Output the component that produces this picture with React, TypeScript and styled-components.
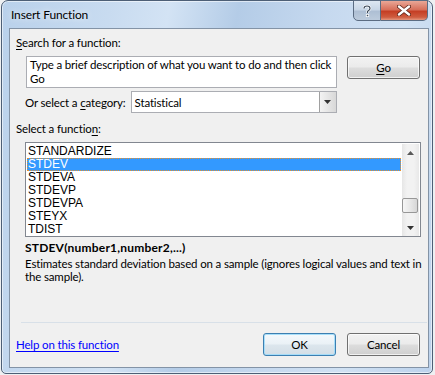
import React from "react";
import styled, { createGlobalStyle, css } from "styled-components";

const GlobalStyle = createGlobalStyle`
  html, body { margin: 0; padding: 0; }
  body {
    background: #eef0f2;
    font-family: "Segoe UI", Lato, "Noto Sans", sans-serif;
    font-size: 11.5px;
    letter-spacing: -0.15px;
    color: #000;
    width: 435px;
    height: 375px;
    overflow: hidden;
  }
`;

const Window = styled.div`
  box-sizing: border-box;
  margin-left: 1px;
  width: 432px;
  height: 374px;
  border: 1px solid #4d5f76;
  border-radius: 7px 7px 5px 5px;
  background: linear-gradient(100deg, #b9d1eb 0%, #c8dbf0 22%, #d3e3f4 34%, #b4cce7 48%, #c6d9ef 66%, #d0e1f3 82%, #bcd2ec 100%);
  box-shadow: inset 0 0 0 1px rgba(255, 255, 255, 0.55);
  display: flex;
  flex-direction: column;
  padding: 0 3px 5px 7px;
`;

const TitleBar = styled.div`
  height: 27px;
  display: flex;
  align-items: flex-start;
  justify-content: space-between;
`;

const Title = styled.div`
  padding: 6px 0 0 2px;
  font-size: 12px;
  color: #000;
  text-shadow: 0 0 6px rgba(255, 255, 255, 0.9);
`;

const CaptionButtons = styled.div`
  display: flex;
  margin-top: -1px;
  margin-right: 1px;
`;

const CaptionButton = styled.div<{ $close?: boolean }>`
  box-sizing: border-box;
  height: 21px;
  display: flex;
  align-items: center;
  justify-content: center;
  border: 1px solid #5b6c82;
  ${(p) =>
    p.$close
      ? css`
          width: 47px;
          border-left: none;
          border-radius: 0 0 5px 0;
          background: linear-gradient(180deg, #e9a797 0%, #d7705b 45%, #c53f25 55%, #cf5c3f 85%, #e39780 100%);
        `
      : css`
          width: 28px;
          border-radius: 0 0 0 5px;
          background: linear-gradient(180deg, #dde7f2 0%, #c8d6e6 45%, #aebfd4 55%, #bccbdc 100%);
        `}
`;

const Panel = styled.div`
  flex: 1;
  box-sizing: border-box;
  background: #f0f0f0;
  border: 1px solid #8393a6;
  display: flex;
  flex-direction: column;
  padding: 6px 7px 0 6px;
`;

const Label = styled.div<{ $gap?: number }>`
  line-height: 15px;
  height: 15px;
  margin-top: ${(p) => p.$gap ?? 0}px;
  white-space: nowrap;
`;

const U = styled.span`
  text-decoration: underline;
  text-underline-offset: 2px;
`;

const SearchRow = styled.div`
  display: flex;
  align-items: flex-start;
  margin-top: 6px;
  padding-left: 10px;
  gap: 10px;
`;

const SearchBox = styled.div`
  box-sizing: border-box;
  width: 311px;
  height: 32px;
  background: #fff;
  border: 1px solid #abadb3;
  padding: 1px 3px;
  line-height: 14px;
  white-space: nowrap;
  overflow: hidden;
`;

const Button = styled.div<{ $default?: boolean }>`
  box-sizing: border-box;
  width: 73px;
  height: 23px;
  border: 1px solid ${(p) => (p.$default ? "#3c7fb1" : "#707070")};
  border-radius: 3px;
  display: flex;
  align-items: center;
  justify-content: center;
  background: ${(p) =>
    p.$default
      ? "linear-gradient(180deg, #f4f9fc 0%, #eaf1f6 48%, #dce6ed 52%, #d3dee6 100%)"
      : "linear-gradient(180deg, #f2f2f2 0%, #ebebeb 48%, #dddddd 52%, #cfcfcf 100%)"};
  box-shadow: inset 0 0 0 1px ${(p) => (p.$default ? "rgba(160, 220, 250, 0.9)" : "rgba(255,255,255,0.7)")};
`;

const CategoryRow = styled.div`
  display: flex;
  align-items: center;
  margin-top: 3px;
  padding-left: 9px;
  gap: 5px;
`;

const Select = styled.div`
  box-sizing: border-box;
  width: 206px;
  height: 22px;
  background: #fff;
  border: 1px solid #abadb3;
  display: flex;
  align-items: center;
  padding-left: 3px;
  justify-content: space-between;
`;

const SelectArrow = styled.div`
  box-sizing: border-box;
  width: 17px;
  height: 20px;
  border-left: 1px solid #a0a0a0;
  background: linear-gradient(90deg, #f3f3f3, #d8d8d8);
  display: flex;
  align-items: center;
  justify-content: center;
`;

const ListBox = styled.div`
  box-sizing: border-box;
  margin: 6px 0 0 9px;
  width: 396px;
  height: 95px;
  border: 1px solid #828790;
  background: #fff;
  display: flex;
  padding: 1px 1px 0 1px;
`;

const Items = styled.div`
  width: 375px;
  padding-top: 1px;
`;

const Item = styled.div<{ $selected?: boolean }>`
  box-sizing: border-box;
  height: 13px;
  line-height: 13px;
  font-family: "Liberation Sans", Arial, sans-serif;
  font-size: 12px;
  letter-spacing: 0;
  padding-left: 1px;
  ${(p) =>
    p.$selected &&
    css`
      background: #3399ff;
      color: #fff;
      outline: 1px dotted #e8902a;
      outline-offset: -1px;
    `}
`;

const ScrollBar = styled.div`
  margin-left: 1px;
  width: 17px;
  height: 92px;
  background: linear-gradient(90deg, #e6e6e6, #f2f2f2 30%, #f2f2f2 70%, #e8e8e8);
  display: flex;
  flex-direction: column;
`;

const ScrollArrow = styled.div`
  height: 17px;
  display: flex;
  align-items: center;
  justify-content: center;
`;

const Track = styled.div`
  flex: 1;
`;

const Thumb = styled.div`
  box-sizing: border-box;
  margin-top: 37px;
  width: 16px;
  height: 15px;
  border: 1px solid #979797;
  border-radius: 2px;
  background: linear-gradient(90deg, #f6f6f6 0%, #e8e8e8 50%, #d6d6d6 100%);
`;

const Signature = styled.div`
  margin: 3px 0 0 9px;
  font-weight: bold;
  font-size: 12px;
  letter-spacing: 0.2px;
  line-height: 16px;
`;

const Description = styled.div`
  margin: 1px 0 0 9px;
  line-height: 13px;
  white-space: nowrap;
`;

const Spacer = styled.div`
  flex: 1;
`;

const Separator = styled.div`
  margin: 0 0 0 5px;
  height: 1px;
  width: 406px;
  background: #d8e0e8;
`;

const Footer = styled.div`
  display: flex;
  align-items: center;
  height: 44px;
`;

const HelpLink = styled.a`
  color: #0000ff;
  text-decoration: underline;
  text-underline-offset: 2px;
  margin-right: auto;
  margin-top: -2px;
  cursor: pointer;
`;

const ButtonGroup = styled.div`
  display: flex;
  gap: 11px;
  margin-right: 1px;
  margin-top: -2px;
`;

const Triangle = ({ up }: { up?: boolean }) => (
  <svg width="7" height="4" viewBox="0 0 7 4">
    <path d={up ? "M3.5 0 L7 4 L0 4 Z" : "M0 0 L7 0 L3.5 4 Z"} fill={up ? "#5a5a5a" : "#333"} />
  </svg>
);

const functions = ["STANDARDIZE", "STDEV", "STDEVA", "STDEVP", "STDEVPA", "STEYX", "TDIST"];

export default function App() {
  return (
    <>
      <GlobalStyle />
      <Window>
        <TitleBar>
          <Title>Insert Function</Title>
          <CaptionButtons>
            <CaptionButton>
              <svg width="10" height="12" viewBox="0 0 10 12">
                <path
                  d="M2 3.5 C2 1.5 3.5 1 5 1 C6.8 1 8 2 8 3.5 C8 5 6 5.5 5.5 6.5 L5.5 8"
                  stroke="#fff"
                  strokeWidth="2.6"
                  fill="none"
                />
                <path
                  d="M2 3.5 C2 1.5 3.5 1 5 1 C6.8 1 8 2 8 3.5 C8 5 6 5.5 5.5 6.5 L5.5 8"
                  stroke="#3d4a5a"
                  strokeWidth="1.2"
                  fill="none"
                />
                <rect x="4.3" y="9.3" width="2.4" height="2.4" fill="#3d4a5a" stroke="#fff" strokeWidth="0.8" />
              </svg>
            </CaptionButton>
            <CaptionButton $close>
              <svg width="14" height="11" viewBox="0 0 14 11">
                <path d="M2 1.5 L12 9.5 M12 1.5 L2 9.5" stroke="#5b2418" strokeWidth="4" strokeLinecap="round" />
                <path d="M2 1.5 L12 9.5 M12 1.5 L2 9.5" stroke="#fff" strokeWidth="2.4" strokeLinecap="round" />
              </svg>
            </CaptionButton>
          </CaptionButtons>
        </TitleBar>
        <Panel>
          <Label>
            <U>S</U>earch for a function:
          </Label>
          <SearchRow>
            <SearchBox>
              Type a brief description of what you want to do and then click
              <br />
              Go
            </SearchBox>
            <Button>
              <U>G</U>o
            </Button>
          </SearchRow>
          <CategoryRow>
            <span>
              Or select a <U>c</U>ategory:
            </span>
            <Select>
              <span>Statistical</span>
              <SelectArrow>
                <Triangle />
              </SelectArrow>
            </Select>
          </CategoryRow>
          <Label $gap={8}>
            Select a functio<U>n</U>:
          </Label>
          <ListBox>
            <Items>
              {functions.map((f) => (
                <Item key={f} $selected={f === "STDEV"}>
                  {f}
                </Item>
              ))}
            </Items>
            <ScrollBar>
              <ScrollArrow>
                <Triangle up />
              </ScrollArrow>
              <Track>
                <Thumb />
              </Track>
              <ScrollArrow>
                <Triangle />
              </ScrollArrow>
            </ScrollBar>
          </ListBox>
          <Signature>STDEV(number1,number2,...)</Signature>
          <Description>
            Estimates standard deviation based on a sample (ignores logical values and text in
            <br />
            the sample).
          </Description>
          <Spacer />
          <Separator />
          <Footer>
            <HelpLink>Help on this function</HelpLink>
            <ButtonGroup>
              <Button $default>OK</Button>
              <Button>Cancel</Button>
            </ButtonGroup>
          </Footer>
        </Panel>
      </Window>
    </>
  );
}
